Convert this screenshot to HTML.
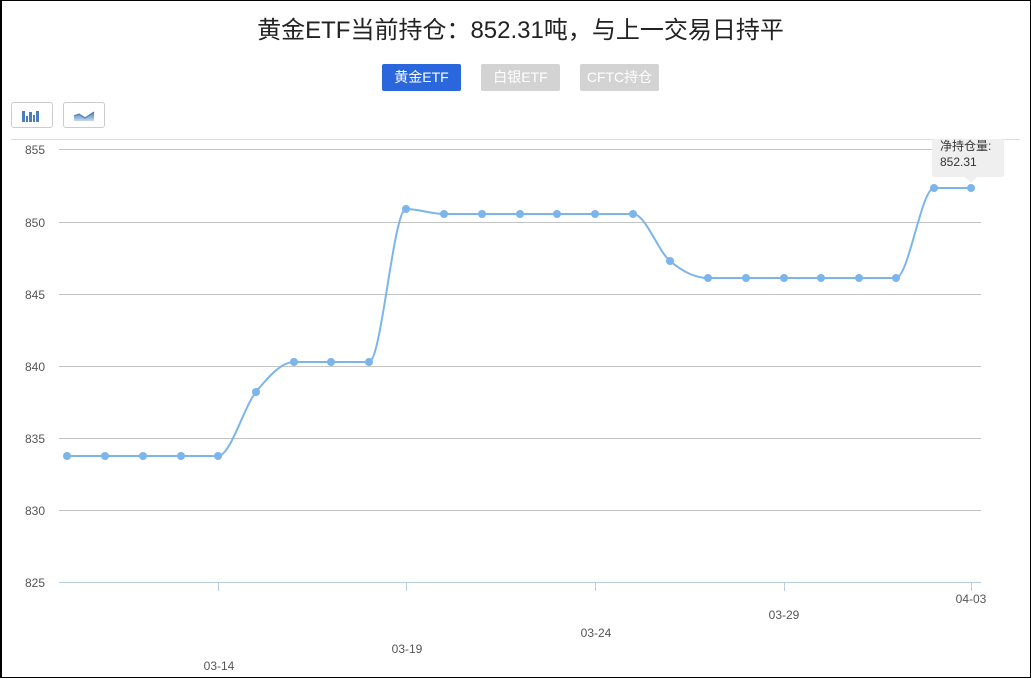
<!DOCTYPE html>
<html><head><meta charset="utf-8"><style>
html,body{margin:0;padding:0;background:#fff;}
body{width:1031px;height:679px;position:relative;overflow:hidden;font-family:"Liberation Sans","Noto Sans CJK SC",sans-serif;}
.frame{position:absolute;left:0;top:0;width:1028px;height:676px;border:1px solid #000;border-left:2px solid #000;}
.title{position:absolute;left:0;width:1041px;top:10px;text-align:center;font-size:24px;color:#222;}
.btn{position:absolute;top:64px;height:27px;width:79px;line-height:27px;text-align:center;color:#fff;font-size:14px;border-radius:2px;background:#d3d3d3;}
.ib{position:absolute;top:102px;width:42px;height:26px;border:1px solid #ccc;border-radius:3px;box-sizing:border-box;}
</style></head><body>
<div class="frame"></div>
<div class="title">黄金ETF当前持仓：852.31吨，与上一交易日持平</div>
<div class="btn" style="left:382px;background:#2a67dc">黄金ETF</div>
<div class="btn" style="left:481px">白银ETF</div>
<div class="btn" style="left:580px">CFTC持仓</div>
<div class="ib" style="left:11px"><svg width="42" height="26" style="position:absolute;left:-1px;top:-1px"><g fill="#4a7ebb"><rect x="11" y="9" width="3" height="11"/><rect x="15" y="14" width="2" height="6"/><rect x="18" y="10" width="3" height="10"/><rect x="22" y="13" width="2" height="7"/><rect x="25" y="9" width="3" height="11"/></g></svg></div>
<div class="ib" style="left:63px"><svg width="42" height="26" style="position:absolute;left:-1px;top:-1px"><defs><linearGradient id="g" x1="0" y1="0" x2="0" y2="1"><stop offset="0" stop-color="#4a7ebb"/><stop offset="1" stop-color="#c8d8ee"/></linearGradient></defs><path d="M11,14 L16,12 L22,16 L31,10 L31,19 L11,19Z" fill="url(#g)"/><path d="M11,14 L16,12 L22,16 L31,10" stroke="#4a7ebb" stroke-width="1.2" fill="none"/></svg></div>
<svg width="1031" height="679" style="position:absolute;left:0;top:0">
<line x1="11" y1="139.5" x2="1020" y2="139.5" stroke="#ddd"/>
<g stroke="#c4c4c4" stroke-width="1">
<line x1="59" y1="149.5" x2="981" y2="149.5"/><line x1="59" y1="222.5" x2="981" y2="222.5"/><line x1="59" y1="294.5" x2="981" y2="294.5"/><line x1="59" y1="366.5" x2="981" y2="366.5"/><line x1="59" y1="438.5" x2="981" y2="438.5"/><line x1="59" y1="510.5" x2="981" y2="510.5"/>
</g>
<g stroke="#b8cce0"><line x1="59" y1="582.5" x2="981" y2="582.5"/><line x1="218.5" y1="582" x2="218.5" y2="591"/><line x1="406.5" y1="582" x2="406.5" y2="591"/><line x1="595.5" y1="582" x2="595.5" y2="591"/><line x1="784.5" y1="582" x2="784.5" y2="591"/><line x1="971.5" y1="582" x2="971.5" y2="591"/></g>
<g font-size="12" fill="#555" text-anchor="end" font-family="Liberation Sans,sans-serif">
<text x="45" y="154">855</text><text x="45" y="227">850</text><text x="45" y="299">845</text><text x="45" y="371">840</text><text x="45" y="443">835</text><text x="45" y="515">830</text><text x="45" y="587">825</text></g>
<g font-size="12" fill="#555" text-anchor="middle" font-family="Liberation Sans,sans-serif">
<text x="219" y="670">03-14</text><text x="407" y="653">03-19</text><text x="596" y="637">03-24</text><text x="784" y="619">03-29</text><text x="971" y="603">04-03</text></g>
<rect x="932" y="139" width="72" height="38" rx="2" fill="#efefef"/>
<polygon points="965,177 977,177 971,183" fill="#efefef"/>
<text x="940" y="150" font-size="12" fill="#333" font-family="Liberation Sans,Noto Sans CJK SC,sans-serif">净持仓量:</text>
<text x="940" y="166" font-size="12" fill="#333" font-family="Liberation Sans,sans-serif">852.31</text>
<path d="M67,456 L218,456 C230.5,456 243.5,407.5 256,392 C268.5,376.5 281.5,362 294,362 L369,362 C381.5,362 393.5,209 406,209 C418.5,209 431.5,214 444,214 L633,214 C645.5,214 657.5,250.4 670,261 C682.5,271.6 695.5,278 708,278 L896,278 C908.5,278 921.5,188 934,188 L971,188" fill="none" stroke="#7cb5ec" stroke-width="2"/>
<g fill="#7cb5ec">
<circle cx="67" cy="456" r="4"/><circle cx="105" cy="456" r="4"/><circle cx="143" cy="456" r="4"/><circle cx="181" cy="456" r="4"/><circle cx="218" cy="456" r="4"/><circle cx="256" cy="392" r="4"/><circle cx="294" cy="362" r="4"/><circle cx="331" cy="362" r="4"/><circle cx="369" cy="362" r="4"/><circle cx="406" cy="209" r="4"/><circle cx="444" cy="214" r="4"/><circle cx="482" cy="214" r="4"/><circle cx="520" cy="214" r="4"/><circle cx="557" cy="214" r="4"/><circle cx="595" cy="214" r="4"/><circle cx="633" cy="214" r="4"/><circle cx="670" cy="261" r="4"/><circle cx="708" cy="278" r="4"/><circle cx="746" cy="278" r="4"/><circle cx="784" cy="278" r="4"/><circle cx="821" cy="278" r="4"/><circle cx="859" cy="278" r="4"/><circle cx="896" cy="278" r="4"/><circle cx="934" cy="188" r="4"/><circle cx="971" cy="188" r="4"/>
</g>
</svg>
</body></html>
